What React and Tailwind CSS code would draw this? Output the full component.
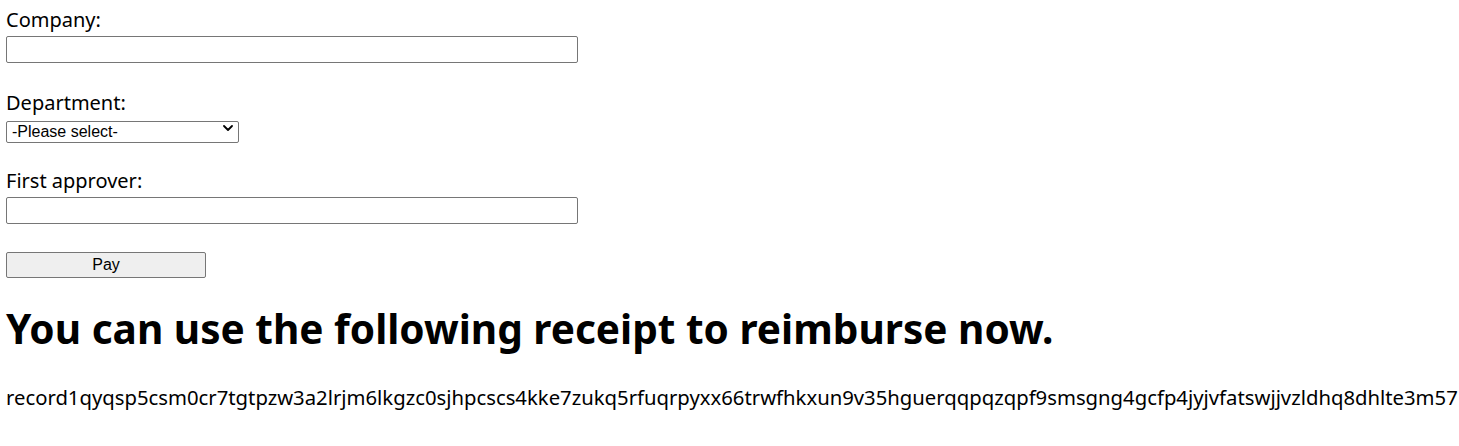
import React from "react";

const RECORD =
  "record1qyqsp5csm0cr7tgtpzw3a2lrjm6lkgzc0sjhpcscs4kke7zukq5rfuqrpyxx66trwfhkxun9v35hguerqqpqzqpf9smsgng4gcfp4jyjvfatswjjvzldhq8dhlte3m57";

export default function App() {
  return (
    <div className="bg-white text-black min-h-[446px] pl-[6px] pt-[6px] font-['Noto_Sans',sans-serif] overflow-hidden">
      <div className="flex flex-col items-start">
        <label className="block text-[20px] leading-[27px] h-[27px]">Company:</label>
        <input
          type="text"
          className="mt-[3px] w-[572px] h-[27px] border border-[#767676] rounded-[2px] bg-white outline-none"
        />

        <label className="mt-[26px] block text-[20px] leading-[27px] h-[27px]">Department:</label>
        <div className="mt-[3px] relative w-[233px] h-[22px]">
          <select className="appearance-none w-full h-full border border-[#767676] rounded-[2px] bg-white pl-[5px] text-[16px] leading-[20px] font-['Liberation_Sans',Arial,sans-serif] text-black outline-none">
            <option>-Please select-</option>
          </select>
          <svg
            className="absolute left-[217px] top-[6px] pointer-events-none"
            width="10"
            height="6"
            viewBox="0 0 10 6"
            fill="none"
          >
            <path d="M1 1 L5 5 L9 1" stroke="#000" strokeWidth="1.8" strokeLinecap="round" strokeLinejoin="round" />
          </svg>
        </div>

        <label className="mt-[26px] block text-[20px] leading-[27px] h-[27px]">First approver:</label>
        <input
          type="text"
          className="mt-[3px] w-[572px] h-[27px] border border-[#767676] rounded-[2px] bg-white outline-none"
        />

        <button
          type="button"
          className="mt-[28px] w-[200px] h-[26px] border border-[#767676] rounded-[2px] bg-[#efefef] text-[16px] leading-[20px] font-['Liberation_Sans',Arial,sans-serif] text-black"
        >
          Pay
        </button>

        <h1 className="mt-[26px] font-bold text-[40.6px] leading-[50px] whitespace-nowrap">
          You can use the following receipt to reimburse now.
        </h1>

        <p className="mt-[31px] text-[20.3px] leading-[24px] whitespace-nowrap">{RECORD}</p>
      </div>
    </div>
  );
}
